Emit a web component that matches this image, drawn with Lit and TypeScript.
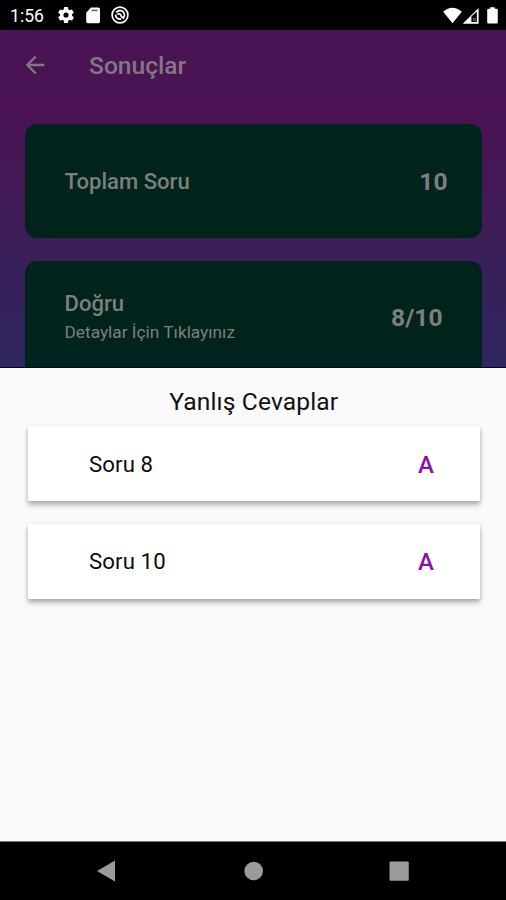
import { LitElement, html, css, svg } from "lit";
import { customElement } from "lit/decorators.js";

const GEAR =
  "M19.14 12.94c.04-.3.06-.61.06-.94s-.02-.64-.07-.94l2.03-1.58a.49.49 0 0 0 .12-.61l-1.92-3.32a.49.49 0 0 0-.59-.22l-2.39.96a7 7 0 0 0-1.62-.94l-.36-2.54a.48.48 0 0 0-.48-.41h-3.84a.47.47 0 0 0-.47.41l-.36 2.54c-.59.24-1.13.57-1.62.94l-2.39-.96a.48.48 0 0 0-.59.22L2.74 8.87a.48.48 0 0 0 .12.61l2.03 1.58a6 6 0 0 0 0 1.88l-2.03 1.58a.49.49 0 0 0-.12.61l1.92 3.32c.12.22.37.29.59.22l2.39-.96c.5.38 1.03.7 1.62.94l.36 2.54c.05.24.24.41.48.41h3.84c.24 0 .44-.17.47-.41l.36-2.54a7 7 0 0 0 1.62-.94l2.39.96c.22.08.47 0 .59-.22l1.92-3.32a.48.48 0 0 0-.12-.61zM12 15.1a3.1 3.1 0 1 1 0-6.2 3.1 3.1 0 0 1 0 6.2z";

@customElement("status-bar")
class StatusBar extends LitElement {
  static styles = css`
    :host {
      display: flex;
      align-items: center;
      height: 30px;
      box-sizing: border-box;
      padding: 1px 8px 0 10px;
      background: #000;
      color: #fff;
      font: 400 17.6px/30px Roboto, sans-serif;
    }
    svg { display: block; fill: currentColor; }
    .time { width: 46px; }
    .left { display: flex; align-items: center; flex: 1; }
    .gear { width: 20px; height: 20px; margin-top: -1px; }
    .sd { width: 14px; height: 17px; margin-left: 10px; }
    .disc { width: 18px; height: 18px; margin-left: 11px; }
    .wifi { width: 19px; height: 17px; }
    .cell { width: 17px; height: 17px; }
    .battery { width: 11px; height: 17px; margin-left: 8px; }
    .wifi, .cell, .battery, .disc { margin-top: -1px; }
  `;
  render() {
    return html`
      <span class="time">1:56</span>
      <div class="left">
        <svg class="gear" viewBox="0 0 24 24"><path d=${GEAR} /></svg>
        <svg class="sd" viewBox="0 0 14 17">
          <path d="M5 .6h7.2Q14 .6 14 2.2v12.4Q14 16.2 12.4 16.2H1.8Q.2 16.2.2 14.6V5.8z" />
          <path fill="#000" opacity=".6" d="M5.6 2.6h6v1.6h-6z" />
        </svg>
        <svg class="disc" viewBox="0 0 18 18">
          <g fill="none" stroke="currentColor">
            <circle cx="9" cy="9" r="7.9" stroke-width="1.7" />
            <path stroke-width="1.7" d="M5 6.4Q9 2.8 12.5 6Q14.2 8.6 12.9 11.4M4.5 8.6Q5 13.4 10.2 13.2M6.2 8.2Q9.4 6.8 10.4 10.4L13 12.6" />
          </g>
        </svg>
      </div>
      <svg class="wifi" viewBox="0 0 19 17"><path d="M.2 4.7Q9.5-3.2 18.8 4.7L9.5 16.2z" /></svg>
      <svg class="cell" viewBox="0 0 17 17">
        <path fill-rule="evenodd" d="M.7 16.8L16.6 1v15.8zM9.4 9.6v5.5h5.4V4.6z" />
        <path d="M10.8 10.8h3v3.3h-3z" opacity=".3" />
      </svg>
      <svg class="battery" viewBox="0 0 11 17">
        <path d="M3.2.3h4.6v1.4h1.6q1.4 0 1.4 1.4v12.1q0 1.4-1.4 1.4H1.6Q.2 16.6.2 15.2V3.1q0-1.4 1.4-1.4h1.6z" />
      </svg>
    `;
  }
}

@customElement("score-card")
class ScoreCard extends LitElement {
  static properties = { label: {}, hint: {}, value: {} };
  declare label: string;
  declare hint?: string;
  declare value: string;
  static styles = css`
    :host {
      display: flex;
      align-items: center;
      justify-content: space-between;
      height: 114.5px;
      flex: none;
      box-sizing: border-box;
      padding: 1px 34.5px 0 39.5px;
      border-radius: 12px;
      background: #00241c;
      color: #7d7f7e;
      font-family: Roboto, sans-serif;
    }
    :host([hint]) { padding: 0 39.5px 1px 39.5px; }
    .label { font-size: 22.1px; line-height: 29px; font-weight: 500; }
    .hint { font-size: 17.3px; line-height: 28px; }
    .value { font-size: 24.6px; line-height: 29px; font-weight: 700; }
  `;
  render() {
    return html`
      <div>
        <div class="label">${this.label}</div>
        ${this.hint ? html`<div class="hint">${this.hint}</div>` : ""}
      </div>
      <div class="value">${this.value}</div>
    `;
  }
}

@customElement("answer-row")
class AnswerRow extends LitElement {
  static properties = { label: {}, answer: {} };
  declare label: string;
  declare answer: string;
  static styles = css`
    :host {
      display: flex;
      align-items: center;
      justify-content: space-between;
      height: 75px;
      box-sizing: border-box;
      padding: 0 46px 0 61.5px;
      background: #fff;
      color: #0c0c0c;
      box-shadow: 0 4px 5px rgba(0, 0, 0, 0.26), 0 1px 4px rgba(0, 0, 0, 0.12);
      font: 400 22.2px/30px Roboto, sans-serif;
      letter-spacing: 0.1px;
    }
    .answer { color: #8e0fa3; font-size: 24px; font-weight: 500; letter-spacing: 0; padding-top: 2px; }
  `;
  render() {
    return html`<span>${this.label}</span><span class="answer">${this.answer}</span>`;
  }
}

@customElement("nav-bar")
class NavBar extends LitElement {
  static styles = css`
    :host { display: block; height: 59px; background: #000; border-top: 1px solid #777; box-sizing: border-box; }
    svg { display: block; fill: #9b9b9b; }
  `;
  render() {
    return html`<svg width="506" height="58" viewBox="0 842 506 58">
      ${svg`<path d="M97 871L115 860.5v21z" />
      <circle cx="253.7" cy="871" r="9.3" />
      <rect x="389.5" y="861.5" width="19.3" height="19.3" rx="1" />`}
    </svg>`;
  }
}

@customElement("app-root")
class AppRoot extends LitElement {
  static styles = css`
    :host {
      display: flex;
      flex-direction: column;
      height: 900px;
      overflow: hidden;
      font-family: Roboto, sans-serif;
    }
    .page {
      height: 338px;
      flex: none;
      box-sizing: border-box;
      overflow: hidden;
      display: flex;
      flex-direction: column;
      background: linear-gradient(180deg, #491453 0, #4a1253 80px, #3b1e58 215px, #2e265e 337px);
      border-bottom: 1px solid #00002e;
    }
    .bar {
      display: flex;
      align-items: center;
      gap: 40px;
      height: 69px;
      flex: none;
      padding-left: 21px;
      color: #827785;
      font-size: 24.6px;
      font-weight: 500;
    }
    .bar span { padding-top: 2px; }
    .back { width: 28px; height: 28px; fill: currentColor; }
    .cards { display: flex; flex-direction: column; gap: 22.5px; padding: 24.5px 24px 0 25px; }
    .sheet { flex: 1; background: #fafafa; padding: 17px 26px 0 27.5px; }
    .heading {
      height: 34px;
      line-height: 34px;
      text-align: center;
      color: #111;
      font-size: 24.6px;
      letter-spacing: 0.12px;
      margin-bottom: 7px;
    }
    .rows { display: flex; flex-direction: column; gap: 22.5px; }
  `;
  render() {
    return html`
      <status-bar></status-bar>
      <div class="page">
        <div class="bar">
          <svg class="back" viewBox="0 0 24 24"><path d="M20 11H7.83l5.59-5.59L12 4l-8 8 8 8 1.41-1.41L7.83 13H20z" /></svg>
          <span>Sonuçlar</span>
        </div>
        <div class="cards">
          <score-card label="Toplam Soru" value="10"></score-card>
          <score-card label="Doğru" hint="Detaylar İçin Tıklayınız" value="8/10"></score-card>
        </div>
      </div>
      <div class="sheet">
        <div class="heading">Yanlış Cevaplar</div>
        <div class="rows">
          <answer-row label="Soru 8" answer="A"></answer-row>
          <answer-row label="Soru 10" answer="A"></answer-row>
        </div>
      </div>
      <nav-bar></nav-bar>
    `;
  }
}
